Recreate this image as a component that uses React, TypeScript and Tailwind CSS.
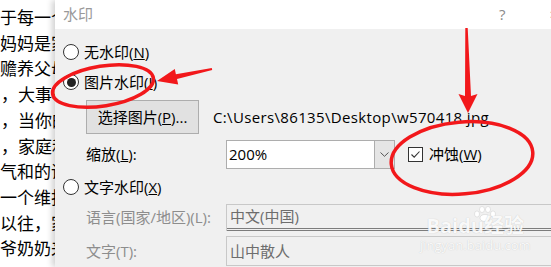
import React from "react";

const docLines = [
  "于每一个",
  "妈妈是家",
  "赡养父母",
  "，大事小",
  "，当你的",
  "，家庭和",
  "气和的话",
  "一个维护",
  "以往，家",
  "爷奶奶来",
];

const Radio: React.FC<{ checked?: boolean }> = ({ checked }) => (
  <span className="flex h-4 w-4 shrink-0 items-center justify-center rounded-full border border-[#333] bg-white">
    {checked && <span className="h-[9px] w-[9px] rounded-full bg-[#222]" />}
  </span>
);

const Checkbox: React.FC = () => (
  <span className="flex h-[15px] w-[15px] shrink-0 items-center justify-center border border-[#333] bg-white">
    <svg width="11" height="11" viewBox="0 0 11 11">
      <polyline points="1.5,5.5 4.2,8.2 9.5,2.5" fill="none" stroke="#333" strokeWidth="1.1" />
    </svg>
  </span>
);

const App: React.FC = () => {
  return (
    <div className="relative flex h-[267px] w-[551px] overflow-hidden bg-white font-['Open_Sans','Noto_Sans_CJK_SC',sans-serif]">
      {/* document behind the dialog */}
      <div className="w-[55px] shrink-0 overflow-hidden whitespace-nowrap pt-[4px] font-['Noto_Sans_CJK_SC',sans-serif] text-[17px] leading-[25.7px] text-black">
        {docLines.map((line, i) => (
          <div key={i} className={line.startsWith("，") ? "pl-[1px]" : ""}>
            {line}
          </div>
        ))}
      </div>

      {/* dialog */}
      <div className="relative z-10 flex min-w-0 flex-1 flex-col overflow-hidden shadow-[-3px_0_6px_rgba(0,0,0,0.18)]">
        <div className="flex h-[29px] w-[510px] shrink-0 items-center bg-white pl-[8px] pr-[7px] text-[15px]">
          <span className="text-[#999]">水印</span>
          <span className="ml-auto text-[#8a8a8a]">?</span>
          <span className="ml-[44px] text-[#8a8a8a]">×</span>
        </div>

        <div className="flex-1 bg-[#f0f0f0] pt-[13px] text-[15px] text-black">
          <div className="flex h-[20px] items-center pl-[8px]">
            <Radio />
            <span className="ml-[5px]">
              无水印(<u>N</u>)
            </span>
          </div>

          <div className="mt-[10px] flex h-[20px] items-center pl-[8px]">
            <Radio checked />
            <span className="ml-[5px]">
              图片水印(<u>I</u>)
            </span>
          </div>

          <div className="mt-[8px] flex h-[34px] items-center pl-[31px]">
            <div className="flex h-full w-[113px] shrink-0 items-center justify-center border border-[#adadad] bg-[#e1e1e1]">
              选择图片(<u>P</u>)...
            </div>
            <span className="ml-[14px] whitespace-nowrap tracking-[0.35px]">
              {"C:\\Users\\86135\\Desktop\\w570418.jpg"}
            </span>
          </div>

          <div className="mt-[6px] flex h-[29px] items-center pl-[31px]">
            <span className="w-[140px] shrink-0">
              缩放(<u>L</u>):
            </span>
            <div className="flex h-full w-[169px] shrink-0 border border-[#adadad] bg-white">
              <span className="flex flex-1 items-center pl-[2px]">200%</span>
              <span className="flex w-[20px] items-center justify-center border-l border-[#adadad] bg-[#e5e5e5]">
                <svg width="9" height="5" viewBox="0 0 9 5">
                  <polyline points="0.5,0.5 4.5,4.3 8.5,0.5" fill="none" stroke="#555" strokeWidth="1" />
                </svg>
              </span>
            </div>
            <span className="ml-[13px]">
              <Checkbox />
            </span>
            <span className="ml-[6px] whitespace-nowrap">
              冲蚀(<u>W</u>)
            </span>
          </div>

          <div className="mt-[8px] flex h-[20px] items-center pl-[8px]">
            <Radio />
            <span className="ml-[5px]">
              文字水印(<u>X</u>)
            </span>
          </div>

          <div className="mt-[7px] flex h-[27px] items-center pl-[31px]">
            <span className="w-[140px] shrink-0 whitespace-nowrap text-[#8d8d8d]">语言(国家/地区)(L):</span>
            <div className="flex h-full w-[340px] shrink-0 flex-col border-x border-t border-[#c8c8c8]">
              <div className="flex flex-1 items-center pl-[3px] text-[#6d6d6d]">中文(中国)</div>
              <div className="h-px bg-[#7c7c7c]" />
              <div className="h-[2px]" />
              <div className="h-px bg-[#7c7c7c]" />
            </div>
          </div>

          <div className="mt-[5px] flex h-[30px] items-center pl-[31px]">
            <span className="w-[140px] shrink-0 text-[#8d8d8d]">文字(T):</span>
            <div className="flex h-full w-[340px] shrink-0 items-center border border-[#c8c8c8] pl-[3px] text-[#6d6d6d]">
              山中散人
            </div>
          </div>
        </div>
      </div>

      {/* site watermark */}
      <div className="pointer-events-none absolute left-[420px] top-[206px] z-20 flex flex-col items-center text-white/90 [text-shadow:0_0_1px_rgba(0,0,0,0.22)]">
        <svg width="26" height="16" viewBox="0 0 26 16" className="ml-[20px]">
          <g fill="#fff" stroke="rgba(0,0,0,0.15)" strokeWidth="0.6">
            <ellipse cx="5" cy="8" rx="2.5" ry="3" />
            <ellipse cx="10" cy="3.5" rx="2.5" ry="3" />
            <ellipse cx="16" cy="3.5" rx="2.5" ry="3" />
            <ellipse cx="21" cy="8" rx="2.5" ry="3" />
            <ellipse cx="13" cy="12" rx="5" ry="3.5" />
          </g>
        </svg>
        <div className="-mt-[6px] text-[20px] font-bold leading-[20px]">Baidu经验</div>
        <div className="text-[13px] leading-[18px]">jingyan.baidu.com</div>
      </div>

      {/* red annotations */}
      <svg className="pointer-events-none absolute left-0 top-0 z-30" width="551" height="267" viewBox="0 0 551 267">
        <ellipse cx="103" cy="86" rx="51" ry="20" transform="rotate(-9 103 86)" fill="none" stroke="#f2181b" strokeWidth="3.5" />
        <ellipse cx="462" cy="158" rx="71" ry="36" transform="rotate(-5 462 158)" fill="none" stroke="#f2181b" strokeWidth="3.5" />
        <polygon
          points="157,81 174.8,68.9 175.9,74.3 211.8,68 212.2,70 177,79.1 178.2,84.5"
          fill="#f2181b"
        />
        <polygon points="468,113 458.5,94 465,96 465.3,28 467.7,28 471,96 477.5,94" fill="#f2181b" />
      </svg>
    </div>
  );
};

export default App;
